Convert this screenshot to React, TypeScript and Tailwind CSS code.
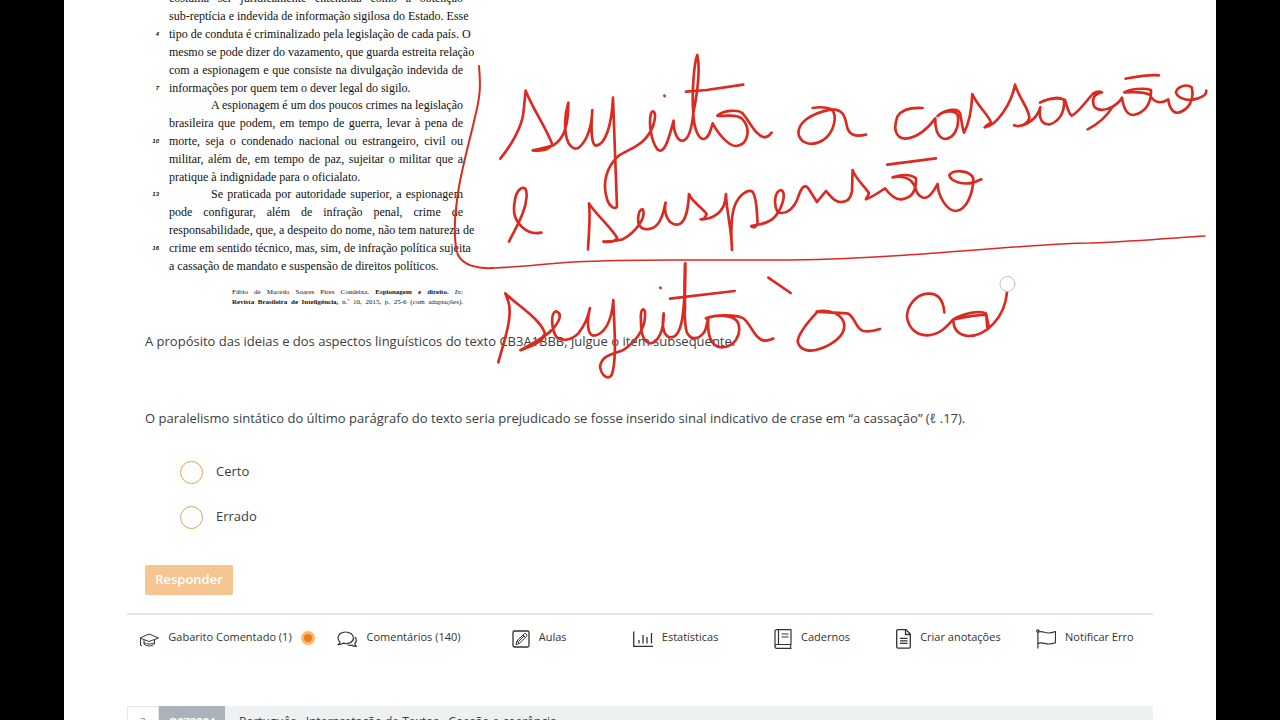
import { ReactNode, useState } from "react"
import clsx from "clsx"

interface PassageLine {
  text: string
  number?: number
  indent?: boolean
  last?: boolean
}

const paragraphs: PassageLine[][] = [
  [
    { text: "costuma ser juridicamente entendida como a obtenção" },
    { text: "sub-reptícia e indevida de informação sigilosa do Estado. Esse" },
    { text: "tipo de conduta é criminalizado pela legislação de cada país. O", number: 4 },
    { text: "mesmo se pode dizer do vazamento, que guarda estreita relação" },
    { text: "com a espionagem e que consiste na divulgação indevida de" },
    { text: "informações por quem tem o dever legal do sigilo.", number: 7, last: true },
  ],
  [
    { text: "A espionagem é um dos poucos crimes na legislação", indent: true },
    { text: "brasileira que podem, em tempo de guerra, levar à pena de" },
    { text: "morte, seja o condenado nacional ou estrangeiro, civil ou", number: 10 },
    { text: "militar, além de, em tempo de paz, sujeitar o militar que a" },
    { text: "pratique à indignidade para o oficialato.", last: true },
  ],
  [
    { text: "Se praticada por autoridade superior, a espionagem", number: 13, indent: true },
    { text: "pode configurar, além de infração penal, crime de" },
    { text: "responsabilidade, que, a despeito do nome, não tem natureza de" },
    { text: "crime em sentido técnico, mas, sim, de infração política sujeita", number: 16 },
    { text: "a cassação de mandato e suspensão de direitos políticos.", last: true },
  ],
]

const Passage = () => (
  <article className="w-[318px] -mt-[11px] font-['Liberation_Serif',serif] text-[12px] leading-[18px] text-[#111]">
    {paragraphs.map((lines, i) => (
      <div key={i} className={clsx(i > 0 && "-mt-px")}>
        {lines.map(line => (
          <div key={line.text} className="flex">
            <span className="w-6 shrink-0 pr-2.5 text-right font-['Liberation_Sans',sans-serif] text-[6px] font-bold italic">
              {line.number}
            </span>
            <p
              className={clsx(
                "flex-1 whitespace-nowrap",
                line.indent && "pl-[42px]",
                !line.last && "[text-align-last:justify]"
              )}
            >
              {line.text}
            </p>
          </div>
        ))}
      </div>
    ))}
    <footer className="mt-3 ml-[87px] text-[7px] leading-[10px] font-bold text-[#111]">
      <p className="whitespace-nowrap [text-align-last:justify]">
        <span className="font-normal">Fábio de Macedo Soares Pires Condeixa.</span> Espionagem e direito.{" "}
        <i className="font-normal">In:</i>
      </p>
      <p className="whitespace-nowrap [text-align-last:justify]">
        Revista Brasileira de Inteligência, <span className="font-normal">n.º 10, 2015, p. 25-6 (com adaptações).</span>
      </p>
    </footer>
  </article>
)

interface OptionProps {
  label: string
  checked: boolean
  onChange: () => void
}

const Option = ({ label, checked, onChange }: OptionProps) => (
  <label className="flex items-center gap-[13px] cursor-pointer">
    <input
      type="radio"
      name="answer"
      checked={checked}
      onChange={onChange}
      className="size-[23px] appearance-none rounded-full border border-[#dba552] bg-white checked:bg-[#f5c592]"
    />
    <span className="-mt-1">{label}</span>
  </label>
)

const CapIcon = () => (
  <svg width="20" height="18" viewBox="0 0 20 18" fill="none" stroke="currentColor" strokeLinejoin="round">
    <path d="M1 8 10 4l9.500 4L10 11.500 1 8ZM1.500 8.500v7M2.500 15v1M5 10v4c2 2.500 8 2.500 10.500 0v-4M5 12.500c3 2 7.500 2 10.500 0" />
  </svg>
)

const CommentsIcon = () => (
  <svg width="20" height="18" viewBox="0 0 20 18" fill="none" stroke="currentColor" strokeWidth="1.200" strokeLinejoin="round">
    <path d="M8.500 2C4 2 1 4.500 1 8c0 1.800.8 3 2 4 .1 1-.8 2-2 2.500 2 .2 3.500-.2 5-1.300 5.500 1.200 10.500-1 10.500-5.200C16.500 4.500 13 2 8.500 2Z" />
    <path d="M18 7c1.800 2 1.600 5-.3 6.500.1 1.300.6 2 1.800 2.700-1.600.3-3.100 0-4.300-1-1.500.4-3 .3-4.700-.2" />
  </svg>
)

const PencilIcon = () => (
  <svg width="18" height="20" viewBox="0 0 18 20" fill="none" stroke="currentColor" strokeLinejoin="round">
    <rect x="1" y="2" width="16" height="16" rx="1.500" strokeWidth="1.300" />
    <path d="m4 15.500.8-3.300 7.500-7.500c1.300-1 3.400 1 2.400 2.400l-7.500 7.500L4 15.500ZM11 6l2.500 2.500M5 12l2.500 2.500M6.500 12.500 12 7" />
  </svg>
)

const ChartIcon = () => (
  <svg width="20" height="18" viewBox="0 0 20 18" fill="none" stroke="currentColor" strokeWidth="1.300">
    <path d="M.700 1.500v14.800H20M6 10v3.500M10 5v8.500M14 7v6.500M18.500 3v10.500" />
  </svg>
)

const NotebookIcon = () => (
  <svg width="18" height="20" viewBox="0 0 18 20" fill="none" stroke="currentColor" strokeWidth="1.200" strokeLinejoin="round">
    <path d="M17 15.500H3c-1.300 0-2 .8-2 1.900S1.700 19.300 3 19.300h14c-.7-1-.7-2.800 0-3.800V.700H3C1.700.700 1 1.500 1 2.700v14.500M4.500.700v14.800M7.500 5h7M7.500 8h7" />
  </svg>
)

const DocumentIcon = () => (
  <svg width="15" height="20" viewBox="0 0 15 20" fill="none" stroke="currentColor" strokeWidth="1.300" strokeLinejoin="round">
    <path d="M10 .700H2C1.200.700.700 1.200.700 2v15.800c0 .8.500 1.400 1.300 1.400h11c.8 0 1.300-.6 1.300-1.400V5L10 .700ZM9.500 1v4.500h4.500M4 9.300h7.500M4 11.800h7.500M4 14.300h7.500" />
  </svg>
)

const FlagIcon = () => (
  <svg width="20" height="20" viewBox="0 0 20 20" fill="none" stroke="currentColor" strokeWidth="1.200" strokeLinejoin="round">
    <circle cx="1.900" cy="2" r="1.200" />
    <path d="M1.900 3.500v16M2.500 3c4-1.500 6 1 10 1 2.500 0 4.500-.6 7-1.500v11.300c-2.500 1-4.500 1.200-7 1.200-4 0-6-2-10.500-.7" />
  </svg>
)

interface ToolProps {
  icon: ReactNode
  label: string
  className?: string
  badge?: boolean
}

const Tool = ({ icon, label, className = "flex-1", badge }: ToolProps) => (
  <button className={clsx("flex items-center justify-center gap-[9px] whitespace-nowrap cursor-pointer", className)}>
    {icon}
    <span className="-mt-1">{label}</span>
    {badge && <span className="-mt-0.5 size-3.5 rounded-full border-3 border-[#fbb772] bg-[#ee7d15]" />}
  </button>
)

// Pen strokes, three units to a pixel, grouped by where they start on the page
const inkGroups = [
  {
    origin: "translate(376 50) scale(0.3333)",
    strokes: [
      "M181 326C215 285 245 230 250 190L257 122C280 180 325 245 337 285C325 300 300 304 278 301C300 296 325 292 340 286C375 265 385 220 385 158C375 190 374 230 378 255C384 290 405 305 420 290C440 270 455 230 457 180C452 240 455 285 468 287C495 285 515 230 519 143L531 470C525 478 510 472 502 450C485 400 500 350 535 318C570 295 620 285 640 225C652 190 640 175 633 190C625 225 635 275 652 298C675 320 690 250 701 212C700 250 715 275 730 272C750 265 757 220 760 190C755 130 762 40 772 15C782 60 770 140 760 190C762 235 775 268 792 267C808 262 812 240 818 220C840 260 870 290 890 288C925 283 935 235 905 205C885 190 860 200 832 197C850 180 895 178 908 190C930 215 945 255 972 262C985 262 988 255 995 248",
      "M738 125L800 120L910 104",
      "M673 137L674 138",
      "M207 575C220 548 238 518 248 490C262 455 262 425 256 416C242 408 228 425 224 455C218 490 225 510 245 530C265 550 285 552 304 548",
      "M444 598C446 560 452 500 447 460C465 490 520 540 532 565C525 576 505 577 490 575C520 574 535 573 548 568C590 545 620 500 608 478C595 475 592 510 597 525C610 545 640 540 655 520C670 500 672 475 677 458C670 490 685 525 712 524C740 520 745 470 747 432C755 455 790 475 800 492C795 505 790 510 782 508C815 510 840 490 850 470C858 450 858 445 858 432C860 490 876 540 876 600C872 540 875 490 885 465C900 430 925 418 938 425C952 445 950 490 953 520C948 534 938 534 934 528C950 522 985 525 1005 500C1030 470 1040 425 1022 420C1005 425 1000 460 1012 485C1040 500 1065 470 1075 440C1085 410 1095 402 1105 415L1131 456L1158 423C1170 435 1180 455 1200 456C1220 456 1230 450 1236 425L1238 360C1245 385 1280 415 1287 430L1278 448C1300 440 1320 425 1335 415C1350 435 1370 450 1385 448C1410 445 1430 430 1428 385C1410 370 1380 375 1358 382C1400 375 1415 390 1425 410C1435 450 1460 450 1475 430C1490 410 1490 405 1493 402C1495 440 1520 482 1548 483C1580 480 1600 430 1600 385C1590 360 1540 358 1528 375C1530 395 1570 405 1600 398L1624 388",
      "M1342 344L1488 325",
    ],
  },
  {
    origin: "translate(726 50) scale(0.3333)",
    strokes: [
      "M68 174C90 170 110 172 125 178C145 200 130 250 100 270C70 288 35 285 26 255C20 220 60 190 125 178C160 178 165 200 170 225C175 255 195 262 228 254",
      "M398 174C360 172 335 178 322 200C310 235 315 262 345 266C380 265 415 235 436 205C435 240 445 265 465 267C490 265 510 235 503 195C495 178 460 182 443 198C470 175 505 175 510 190C515 215 518 235 522 248C540 215 545 180 547 132C560 165 600 200 603 218L590 226L584 232C620 228 665 160 675 104C690 150 720 180 718 205C710 225 690 232 672 226C700 235 740 210 751 172C745 205 755 225 780 223C805 215 825 190 822 150C805 138 775 145 750 158C785 140 815 145 825 150C832 170 835 190 845 197C865 190 890 150 910 130C920 124 930 124 936 127C910 130 905 150 913 170C925 185 950 180 968 170C985 160 990 155 996 143C1000 170 1010 195 1030 195C1060 190 1085 165 1083 120C1060 112 1020 118 1003 127C1040 125 1065 125 1080 135C1090 155 1110 165 1135 148C1138 175 1150 190 1165 188C1195 180 1215 150 1205 112C1190 100 1160 110 1158 128C1165 148 1200 155 1225 145C1245 138 1250 130 1249 122",
      "M968 170C950 200 925 222 893 238",
      "M1007 86C1040 80 1080 72 1107 76",
    ],
  },
  {
    origin: "translate(416 250) scale(0.3333)",
    strokes: [
      "M55 337C70 280 100 200 85 155L76 130C110 165 180 205 195 250C180 280 150 290 122 300C160 280 195 262 215 240C240 215 248 190 228 184C210 190 215 240 230 262C250 275 275 270 295 250C315 225 325 200 330 174C320 210 322 255 340 257C370 255 395 220 400 150C402 220 412 330 395 375C385 390 365 380 360 350C365 315 400 312 430 300C460 280 500 240 495 185C490 170 480 180 483 210C482 250 490 275 510 280C535 280 552 240 551 190C545 230 550 262 575 262C600 260 615 220 616 40C612 120 612 220 620 245C630 270 655 270 670 250C682 235 680 215 685 205C682 250 690 290 725 292C765 290 785 255 775 220C765 195 720 192 678 205C710 192 770 195 790 205C815 225 825 270 855 272C865 272 872 268 880 266",
      "M615 42L615 180",
      "M195 256C180 280 150 290 122 300",
      "M570 146L764 123",
      "M541 113L542 114",
    ],
  },
  {
    origin: "translate(686 260) scale(0.3333)",
    strokes: [
      "M55 53L122 99",
      "M200 158C170 190 145 220 143 245C150 275 185 275 205 268C250 255 285 225 283 195C280 165 240 145 200 155C240 158 280 158 295 161C315 170 315 205 340 213C355 216 375 212 390 207",
      "M583 157C580 120 565 100 535 101C500 102 472 135 471 170C475 205 500 225 530 226C570 225 590 200 610 178C640 160 690 150 708 160L716 198L712 202L709 165C690 162 650 170 610 178C610 205 620 225 655 228C710 228 765 170 771 97",
    ],
  },
]

const Ink = () => (
  <svg
    role="img"
    aria-label="Anotações à mão"
    className="absolute top-0 left-0 h-[400px] w-[1152px] pointer-events-none"
    viewBox="0 0 1152 400"
    fill="none"
    stroke="#dc2a20"
    strokeLinecap="round"
    strokeLinejoin="round"
  >
    <path
      strokeWidth="2"
      d="M415 66C417 87 416 97 411 117C406 140 396 173 393 200C389 227 391 247 394 255C399 265 413 269 429 268"
    />
    <path
      strokeWidth="1.600"
      d="M429 268C459 267 476 264 509 262C549 260 576 260 609 260L726 260C793 259 826 256 859 254C926 249 993 243 1026 243C1076 241 1109 238 1141 236"
    />
    {inkGroups.map(group => (
      <g key={group.origin} transform={group.origin} strokeWidth="8">
        {group.strokes.map(d => (
          <path key={d} d={d} />
        ))}
      </g>
    ))}
    <circle cx="943.500" cy="284" r="7.500" fill="#fff" stroke="#b4c3d6" />
  </svg>
)

const App = () => {
  const [answer, setAnswer] = useState("")

  return (
    <div className="h-screen overflow-hidden bg-black font-['Open_Sans','Noto_Sans',sans-serif] text-[13px] leading-5 text-[#3a3d42]">
      <main className="relative mx-[5%] h-full overflow-hidden bg-white px-[63px]">
        <section className="px-[18px]">
          <Passage />
          <p className="mt-6">
            A propósito das ideias e dos aspectos linguísticos do texto CB3A1BBB, julgue o item subsequente.
          </p>
          <p className="mt-[57px]">
            O paralelismo sintático do último parágrafo do texto seria prejudicado se fosse inserido sinal indicativo de
            crase em “a cassação” (ℓ .17).
          </p>
          <div className="mt-[33px] ml-[35px] flex flex-col items-start gap-[22px]">
            {["Certo", "Errado"].map(label => (
              <Option key={label} label={label} checked={answer === label} onChange={() => setAnswer(label)} />
            ))}
          </div>
          <button className="mt-9 h-[30px] w-[88px] rounded-xs bg-[#f5c592] pb-0.5 font-semibold text-white cursor-pointer">
            Responder
          </button>
        </section>
        <div className="mt-[18px] flex h-[50px] border-t-2 border-[#e6e6e6] text-[11px] text-[#333]">
          <Tool className="w-[200px] shrink-0" icon={<CapIcon />} label="Gabarito Comentado (1)" badge />
          <Tool className="w-[144px] shrink-0" icon={<CommentsIcon />} label="Comentários (140)" />
          <Tool icon={<PencilIcon />} label="Aulas" />
          <Tool icon={<ChartIcon />} label="Estatísticas" />
          <Tool icon={<NotebookIcon />} label="Cadernos" />
          <Tool icon={<DocumentIcon />} label="Criar anotações" />
          <Tool icon={<FlagIcon />} label="Notificar Erro" />
        </div>
        <section className="mt-[43px] flex h-8 items-center bg-[#edf1f2] text-[11px]">
          <span className="flex h-full w-8 items-center justify-center border border-[#e6e6e6] bg-white text-[#888]">
            2
          </span>
          <a href="#Q872884" className="flex h-full w-[66px] items-center justify-center bg-[#a9b3bb] font-bold text-white">
            Q872884
          </a>
          <span className="ml-3.5 text-[12px]">Português , Interpretação de Textos , Coesão e coerência</span>
        </section>
        <Ink />
      </main>
    </div>
  )
}

export default App
